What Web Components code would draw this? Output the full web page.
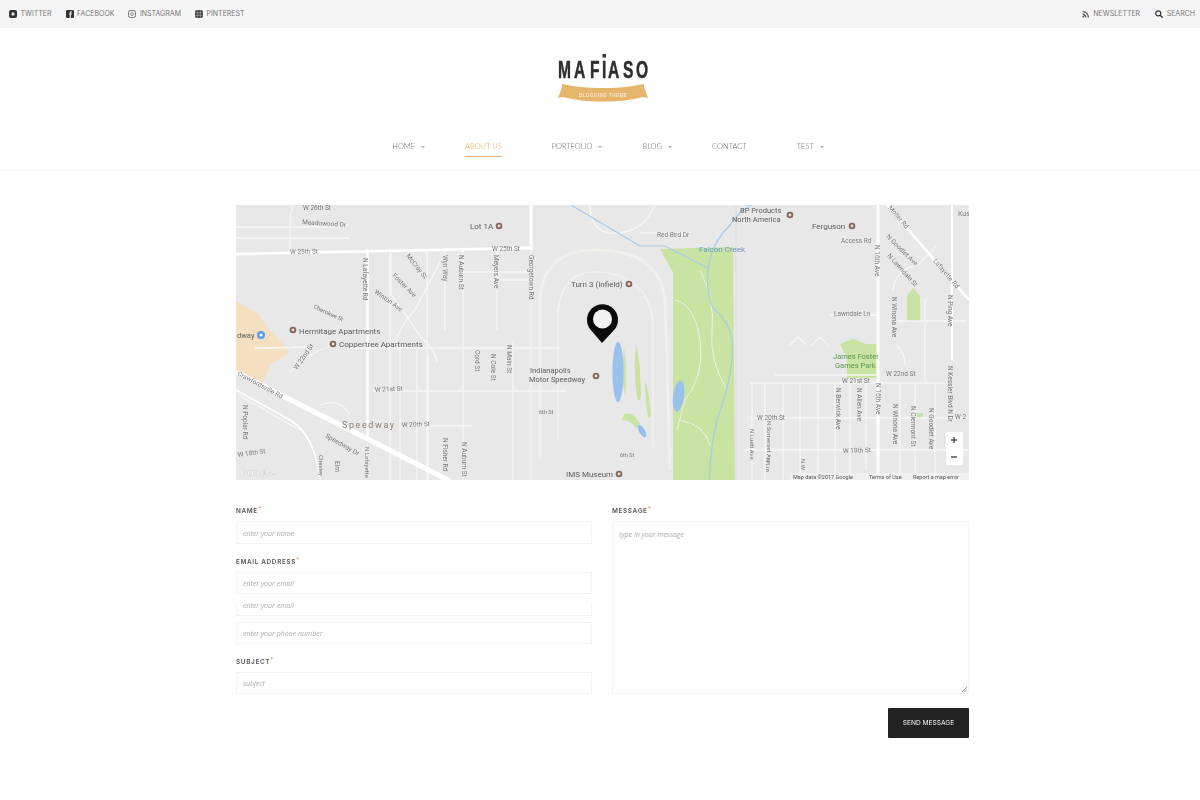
<!DOCTYPE html>
<html lang="en">
<head>
<meta charset="utf-8">
<title>Mafiaso - About us</title>
<style>
  body { margin: 0; background: #fff; font-family: "Inter", "Liberation Sans", sans-serif; }
</style>
</head>
<body>
<site-page>
  <top-bar>
    <top-link slot="left" icon="twitter">TWITTER</top-link>
    <top-link slot="left" icon="facebook">FACEBOOK</top-link>
    <top-link slot="left" icon="instagram">INSTAGRAM</top-link>
    <top-link slot="left" icon="pinterest">PINTEREST</top-link>
    <top-link slot="right" icon="rss">NEWSLETTER</top-link>
    <top-link slot="right" icon="search">SEARCH</top-link>
  </top-bar>
  <site-logo></site-logo>
  <main-nav>
    <nav-item caret>HOME</nav-item>
    <nav-item active>ABOUT US</nav-item>
    <nav-item caret>PORTFOLIO</nav-item>
    <nav-item caret>BLOG</nav-item>
    <nav-item>CONTACT</nav-item>
    <nav-item caret>TEST</nav-item>
  </main-nav>
  <map-panel></map-panel>
  <contact-form>
    <form-field slot="left" label="NAME"><text-box>enter your name</text-box></form-field>
    <form-field slot="left" label="EMAIL ADDRESS">
      <text-box short>enter your email</text-box>
      <text-box clipped>enter your email</text-box>
      <text-box short spaced>enter your phone number</text-box>
    </form-field>
    <form-field slot="left" label="SUBJECT"><text-box short>subject</text-box></form-field>
    <form-field slot="right" label="MESSAGE"><text-box area>type in your message</text-box></form-field>
    <send-button slot="action">SEND MESSAGE</send-button>
  </contact-form>
</site-page>

<script>
class SitePage extends HTMLElement {
  constructor() {
    super();
    this.attachShadow({ mode: "open" });
    this.shadowRoot.innerHTML = `
      <style>
        :host { display: block; height: 800px; overflow: hidden; filter: blur(0.5px); }
      </style>
      <slot></slot>
    `;
  }
}

class TopBar extends HTMLElement {
  constructor() {
    super();
    this.attachShadow({ mode: "open" });
    this.shadowRoot.innerHTML = `
      <style>
        :host { display: flex; justify-content: space-between; align-items: center; height: 28px; padding: 0 5px 0 9px; background: #f5f5f5; }
        .group { display: flex; align-items: center; gap: 14px; }
        .group.right { gap: 15px; }
      </style>
      <div class="group"><slot name="left"></slot></div>
      <div class="group right"><slot name="right"></slot></div>
    `;
  }
}

const TOP_ICONS = {
  twitter: `<rect width="8" height="8" rx="2" fill="#333"/><circle cx="4" cy="4" r="1.7" fill="#ddd"/>`,
  facebook: `<rect width="8" height="8" rx="1.2" fill="#333"/><path d="M5 8V4.6h1V3.4H5V2.8c0-.4.2-.6.6-.6H6V1.2H5.2C4.2 1.2 3.7 1.8 3.7 2.7v.7H3v1.2h.7V8z" fill="#ddd"/>`,
  instagram: `<rect x=".5" y=".5" width="7" height="7" rx="1.8" fill="none" stroke="#777"/><circle cx="4" cy="4" r="1.5" fill="none" stroke="#777" stroke-width=".8"/>`,
  pinterest: `<rect width="8" height="8" rx="2" fill="#444"/><path d="M0 2.7h8M0 5.3h8M2.7 0v8M5.3 0v8" stroke="#bbb" stroke-width=".5"/>`,
  rss: `<path d="M.5 1v1.3c3 0 5.2 2.2 5.2 5.2H7C7 3.9 4.1 1 .5 1z" fill="#555"/><path d="M.5 3.6v1.3c1.5 0 2.6 1.1 2.6 2.6h1.3c0-2.2-1.7-3.9-3.9-3.9z" fill="#555"/><circle cx="1.3" cy="6.7" r=".9" fill="#555"/>`,
  search: `<circle cx="3.3" cy="3.3" r="2.5" fill="none" stroke="#333" stroke-width="1.2"/><path d="M5.2 5.2 7.6 7.6" stroke="#333" stroke-width="1.4"/>`
};

class TopLink extends HTMLElement {
  constructor() {
    super();
    this.attachShadow({ mode: "open" });
  }

  connectedCallback() {
    this.shadowRoot.innerHTML = `
      <style>
        :host { display: inline-flex; align-items: center; gap: 3.5px; font-size: 7px; font-weight: 400; color: #777; line-height: 10px; }
        svg { width: 8px; height: 8px; display: block; flex: none; }
      </style>
      <svg viewBox="0 0 8 8">${TOP_ICONS[this.getAttribute("icon")]}</svg>
      <slot></slot>
    `;
  }
}

class SiteLogo extends HTMLElement {
  constructor() {
    super();
    this.attachShadow({ mode: "open" });
    this.shadowRoot.innerHTML = `
      <style>
        :host { display: flex; justify-content: center; height: 102px; padding: 22px 0 0 6px; box-sizing: border-box; }
        svg { width: 100px; height: 60px; display: block; }
      </style>
      <svg viewBox="0 0 100 60">
        <text y="28" x="7.7 32.3 56.9 75.4 84.6 107.7 127.7" transform="scale(.65 1)" font-family="'Liberation Sans', sans-serif" font-size="24" font-weight="700" fill="#2e2e2e" stroke="#2e2e2e" stroke-width=".5">MAFIASO</text>
        <rect x="49.5" y="4" width="3.5" height="3.5" fill="#333"/>
        <path d="M9 34Q30 38.500 50 38 70 38.500 91 34V37L95 48 90 47Q70 52 50 51.500 30 52 10 47L5 48 9 37Z" fill="#e6b56c"/>
        <text x="50" y="47" text-anchor="middle" font-family="'Liberation Sans', sans-serif" font-size="4.8" font-weight="700" letter-spacing=".3" fill="#f8e6c8">BLOGGING THEME</text>
      </svg>
    `;
  }
}

class MainNav extends HTMLElement {
  constructor() {
    super();
    this.attachShadow({ mode: "open" });
    this.shadowRoot.innerHTML = `
      <style>
        :host { display: flex; justify-content: center; align-items: flex-start; gap: 50px; height: 40px; padding-left: 6px; border-bottom: 1px solid #f9f9f9; }
      </style>
      <slot></slot>
    `;
  }
}

class NavItem extends HTMLElement {
  constructor() {
    super();
    this.attachShadow({ mode: "open" });
    this.shadowRoot.innerHTML = `
      <style>
        :host { display: block; position: relative; padding: 11px 0 3px; font-family: "Lato", sans-serif; font-size: 7.5px; font-weight: 300; line-height: 12px; color: #666; border-bottom: 1.5px solid transparent; }
        :host([active]) { color: #e0a452; border-bottom-color: #e9b76f; }
        :host([caret])::after { content: ""; position: absolute; left: calc(100% + 6px); top: 16px; border: 2px solid transparent; border-top: 2.5px solid #aaa; border-bottom: 0; }
      </style>
      <slot></slot>
    `;
  }
}

class MapPanel extends HTMLElement {
  constructor() {
    super();
    this.attachShadow({ mode: "open" });
  }

  // [x, y, text, size, rotation, colour]
  labels() {
    const grey = "#7a7a7a", dark = "#5e5e5e", green = "#5b9a48", blue = "#6a98cc";
    return [
      [303, 210, "W 26th St", 6.5, 0, grey], [302, 224, "Meadowood Dr", 6.5, 4, grey],
      [470, 229, "Lot 1A", 8, 0, dark], [290, 254, "W 25th St", 6.5, -1, grey], [492, 251, "W 25th St", 6.5, 0, grey],
      [363, 258, "N Lafayette Rd", 6.5, 90, grey], [406, 256, "McCray St", 6.5, 52, grey],
      [392, 276, "Foster Ave", 6.5, 45, grey], [374, 293, "Winton Ave", 6.5, 35, grey],
      [443, 255, "Wyn Way", 6.5, 90, grey], [459, 255, "N Auburn St", 6.5, 90, grey], [494, 255, "Meyers Ave", 6.5, 90, grey],
      [529, 255, "Georgetown Rd", 6.5, 90, grey], [313, 308, "Cherokee St", 6, 25, grey],
      [299, 334, "Hermitage Apartments", 8, 0, dark], [339, 347, "Coppertree Apartments", 8, 0, dark],
      [237, 338, "dway", 7.5, 0, dark], [297, 370, "W 22nd St", 6.5, -55, grey], [375, 392, "W 21st St", 6.5, -3, grey],
      [342, 428, "Speedway", 9, 0, "#8b7f76"], [402, 427, "W 20th St", 6.5, -2, grey],
      [237, 375, "Crawfordsville Rd", 6.5, 28, grey], [325, 437, "Speedway Dr", 6.5, 30, grey],
      [243, 405, "N Poplar Rd", 6.5, 90, grey], [238, 457, "W 18th St", 6.5, -8, grey],
      [319, 455, "Chesley", 6, 90, grey], [335, 461, "Elm", 6.5, 90, grey], [365, 447, "N Lafayette", 6, 90, grey],
      [443, 438, "N Fisher Rd", 6.5, 90, grey], [462, 442, "N Auburn St", 6.5, 90, grey],
      [475, 350, "Cord St", 6.5, 90, grey], [491, 354, "N Cole St", 6.5, 90, grey], [507, 345, "N Main St", 6.5, 90, grey],
      [530, 373, "Indianapolis", 7.5, 0, dark], [529, 382, "Motor Speedway", 7.5, 0, dark],
      [571, 287, "Turn 3 (Infield)", 8, 0, dark], [566, 477, "IMS Museum", 8, 0, dark], [539, 414, "6th St", 5.5, 0, grey],
      [740, 213, "BP Products", 7.5, 0, dark], [732, 222, "North America", 7.5, 0, dark], [812, 229, "Ferguson", 8, 0, dark],
      [657, 237, "Red Bird Dr", 6.5, 0, grey], [699, 252, "Falcon Creek", 8, 0, blue], [841, 243, "Access Rd", 6.5, 0, grey],
      [875, 245, "N 16th Ave", 6.5, 90, grey], [886, 237, "N Goodlet Ave", 6.5, 45, grey], [888, 208, "Moller Rd", 6.5, 50, grey],
      [933, 261, "Lafayette Rd", 6.5, 50, grey], [887, 256, "N Lawndale St", 6.5, 48, grey], [834, 316, "Lawndale Ln", 6.5, 0, grey],
      [958, 216, "Kus", 7, 0, grey], [892, 297, "N Winona Ave", 6.5, 90, grey],
      [833, 359, "James Foster", 7.5, 0, green], [835, 368, "Games Park", 7.5, 0, green],
      [886, 376, "W 22nd St", 6.5, 0, grey], [842, 383, "W 21st St", 6.5, 0, grey], [757, 420, "W 20th St", 6.5, 0, grey],
      [843, 453, "W 18th St", 6.5, -2, grey], [620, 457, "6th St", 5.5, 0, grey], [955, 419, "W 2", 6.5, 0, grey],
      [750, 429, "N Luett Ave", 6, 90, grey], [767, 421, "N Somerset Ave", 6, 90, grey],
      [766, 458, "N Lin", 6, 90, grey], [801, 459, "N W", 6, 90, grey], [836, 388, "N Berwick Ave", 6.5, 90, grey],
      [857, 388, "N Allen Ave", 6.5, 90, grey], [876, 383, "N 16th Ave", 6.5, 90, grey], [893, 404, "N Winona Ave", 6.5, 90, grey],
      [911, 406, "N Clermont St", 6.5, 90, grey], [929, 408, "N Goodlet Ave", 6.5, 90, grey],
      [948, 295, "N Ping Ave", 6.5, 90, grey], [948, 366, "N Kessler Blvd N Dr", 6.5, 90, grey]
    ];
  }

  pois() {
    return [[499, 226], [293, 330], [333, 344], [596, 376], [629, 284], [619, 474], [790, 215], [852, 226]];
  }

  svgLabels() {
    return this.labels().map(([x, y, t, s, r, c]) =>
      `<text x="${x}" y="${y}" font-size="${s}" fill="${c}"${t === "Speedway" ? ' letter-spacing="1.6"' : ""}${r ? ` transform="rotate(${r} ${x} ${y})"` : ""}>${t}</text>`
    ).join("");
  }

  svgPois() {
    return this.pois().map(([x, y]) =>
      `<circle cx="${x}" cy="${y}" r="3.3" fill="#85665a"/><circle cx="${x}" cy="${y}" r="1.4" fill="#e9ddd5"/>`
    ).join("");
  }

  connectedCallback() {
    this.shadowRoot.innerHTML = `
      <style>
        :host { display: block; width: 733px; height: 275px; margin: 34px 0 0 236px; overflow: hidden; }
        svg { display: block; width: 733px; height: 275px; font-family: "Roboto", "Liberation Sans", sans-serif; filter: blur(0.3px); }
      </style>
      <svg viewBox="236 205 733 275">
        <rect x="236" y="205" width="733" height="275" fill="#e8e8e8"/>

        <!-- land use -->
        <path d="M236 301 258 314 268 328 290 352 270 365 262 384 236 372z" fill="#f4dfc0"/>
        <path d="M660 249 733 247 735 480 673 480 673 272z" fill="#c8e3a2"/>
        <path d="M907 296 913 288 920 296V321H907z" fill="#c8e3a2"/>
        <path d="M840 344 853 339 866 344H877V378H847V358z" fill="#c8e3a2"/>
        <rect x="917" y="413" width="6" height="6" fill="#c8e3a2"/>
        <path d="M636 345q4 10 5 50q-1 10-4 2q-4-30-1-52zM624 348q4 25 1 48q-5-20-1-48zM624 414q10-3 16 10l-4 4q-5-8-14-8zM645 380q5 15 6 38l-3-1q-3-20-3-37z" fill="#c8e3a2"/>

        <!-- speedway track -->
        <path d="M540 460V300q3-50 55-50 65 0 70 50l5 170" fill="none" stroke="#efefec" stroke-width="3"/>
        <path d="M558 440V310q5-40 40-38 50 3 55 50v125" fill="none" stroke="#f1f1ef" stroke-width="1.5"/>

        <!-- streets -->
        <g fill="none" stroke="#f6f6f6" stroke-width="1.3">
          <path d="M236 227H340q5 0 8-3M236 238H350M293 205q-3 8-3 22V249"/>
          <path d="M390 249V480M427 249V480M445 249V330M463 249V480M497 249V330M513 340V480M400 345V480M417 350V480M428 355V480"/>
          <path d="M391 253V295q15 20 30 42 15 15 16 25M442 258 415 310q-15 15-20 35M490 280H530M461 272H530M350 348H560M255 348q35 0 60-2M290 372q20-20 40-26"/>
          <path d="M373 391H565M410 426H472M240 396 300 430M320 405q20-8 30 10"/>
          <path d="M590 205q0 25 20 28 25 2 40-18l5-10M640 233h50"/>
          <path d="M750 383H945M752 383V480M765 383V480M783 383V480M800 383V480M818 383V480M835 383V480M850 383V480M866 383V470M900 383V480M915 383V480M935 383V480"/>
          <path d="M750 418H969M745 450H969M775 375H880M790 345l8-8 8 8M812 345l8-8 8 8M830 315H878M870 240H840M893 290q2-20 25-25L936 247"/>
          <path d="M925 298V384M897 321H965M897 345q8 8 8 20"/>
        </g>
        <g fill="none" stroke="#eef2e6">
          <path d="M675 300q20 5 25 40t-15 60l-8 30M700 270q15 30 12 60t15 60M680 420q25 5 30 25"/>
        </g>
        <path d="M736 205V480" stroke="#dcdcdc"/>
        <path d="M531 250V480" stroke="#f1f1f1" stroke-width="1.5"/>
        <g fill="none" stroke="#fff">
          <path d="M236 254 530 248" stroke-width="2.8"/>
          <path d="M531 205V250" stroke-width="3"/>
          <path d="M367.5 249V440" stroke-width="2.5"/>
          <path d="M236 372 450 481" stroke-width="5"/>
          <path d="M878 205V480" stroke-width="3"/>
          <path d="M887 205 969 300" stroke-width="2.5"/>
          <path d="M952 205V360" stroke-width="2"/>
          <path d="M236 390 290 420q25 15 30 60" stroke-width="1.5"/>
        </g>

        <!-- water -->
        <g fill="none" stroke="#a8cbe8" stroke-width="1.2">
          <path d="M571 205 640 246h25l43 22"/>
          <path d="M752 205q-12 5-22 20-20 20-22 45-2 25 5 38 17 15 19 32 3 30-15 80-6 25-8 60"/>
        </g>
        <ellipse cx="618" cy="372" rx="5.5" ry="30" fill="#9ac0ee"/>
        <ellipse cx="678.5" cy="396" rx="5.5" ry="15.5" fill="#9ac0ee" transform="rotate(8 678.5 396)"/>
        <ellipse cx="642" cy="431" rx="3" ry="7" fill="#9ac0ee" transform="rotate(-30 642 431)"/>

        <!-- text and markers -->
        <circle cx="261" cy="335" r="4" fill="#5b9bec"/><circle cx="261" cy="335" r="1.6" fill="#fff"/>
        ${this.svgPois()}
        ${this.svgLabels()}
        <text x="240" y="476" font-size="11" font-weight="700" fill="#f7f7f7" stroke="#cfcfcf" stroke-width=".4">Google</text>

        <!-- zoom control -->
        <rect x="946" y="432" width="17" height="33" fill="#fff"/>
        <path d="M951 440h6M954 437v6" stroke="#555" stroke-width="1.5"/>
        <path d="M951 457h6" stroke="#555" stroke-width="1.5"/>

        <!-- attribution -->
        <rect x="790" y="473" width="179" height="7" fill="#f4f4f4" fill-opacity=".7"/>
        <text x="793" y="478.5" font-size="5.5" fill="#555">Map data ©2017 Google</text>
        <text x="869" y="478.5" font-size="5.5" fill="#555">Terms of Use</text>
        <text x="913" y="478.5" font-size="5.5" fill="#555">Report a map error</text>

        <!-- pin -->
        <path d="M602 343 590 329A15.5 15.5 0 1 1 615 329z" fill="#0a0a0a"/>
        <circle cx="602.5" cy="319" r="9.5" fill="#f2f2f2"/>
      </svg>
    `;
  }
}

class ContactForm extends HTMLElement {
  constructor() {
    super();
    this.attachShadow({ mode: "open" });
    this.shadowRoot.innerHTML = `
      <style>
        :host { display: grid; grid-template-columns: 356px 357px; column-gap: 20px; width: 733px; margin: 25px 0 0 236px; }
        .col { display: flex; flex-direction: column; gap: 12px; }
        .action { grid-column: 1 / -1; display: flex; justify-content: flex-end; margin-top: 14px; }
      </style>
      <div class="col"><slot name="left"></slot></div>
      <div class="col"><slot name="right"></slot></div>
      <div class="action"><slot name="action"></slot></div>
    `;
  }
}

class FormField extends HTMLElement {
  constructor() {
    super();
    this.attachShadow({ mode: "open" });
  }

  connectedCallback() {
    this.shadowRoot.innerHTML = `
      <style>
        :host { display: block; }
        .label { display: block; height: 10px; line-height: 8px; margin-bottom: 6px; font-family: "Inter", sans-serif; font-size: 6.4px; font-weight: 600; letter-spacing: .65px; color: #555; }
        .star { color: #ee8a5e; font-size: 6px; vertical-align: 2px; }
      </style>
      <span class="label">${this.getAttribute("label")}<span class="star">*</span></span>
      <slot></slot>
    `;
  }
}

class TextBox extends HTMLElement {
  constructor() {
    super();
    this.attachShadow({ mode: "open" });
    this.shadowRoot.innerHTML = `
      <style>
        :host { display: block; box-sizing: border-box; height: 23px; padding: 0 6px; border: 1px solid #f3f3f3; background: #fff; font-family: "Open Sans", sans-serif; font-size: 7px; font-style: italic; line-height: 23px; color: #aaa; }
        :host([short]) { height: 22px; line-height: 22px; }
        :host([clipped]) { height: 22px; border-top: 0; line-height: 24px; border-image: linear-gradient(transparent 40%, #f3f3f3 40%) 1; }
        :host([spaced]) { margin-top: 6px; }
        :host([area]) { position: relative; height: 173px; line-height: 25px; }
        svg { display: none; position: absolute; right: 1px; bottom: 1px; width: 5px; height: 5px; }
        :host([area]) svg { display: block; }
      </style>
      <slot></slot>
      <svg viewBox="0 0 5 5"><path d="M5 0 0 5M5 2.5 2.5 5" stroke="#888" stroke-width=".8"/></svg>
    `;
  }
}

class SendButton extends HTMLElement {
  constructor() {
    super();
    this.attachShadow({ mode: "open" });
    this.shadowRoot.innerHTML = `
      <style>
        :host { display: flex; align-items: center; justify-content: center; width: 81px; height: 30px; background: #222; border-radius: 1px; font-family: "Inter", sans-serif; font-size: 6.6px; font-weight: 500; color: #ddd; }
      </style>
      <slot></slot>
    `;
  }
}

customElements.define("site-page", SitePage);
customElements.define("top-bar", TopBar);
customElements.define("top-link", TopLink);
customElements.define("site-logo", SiteLogo);
customElements.define("main-nav", MainNav);
customElements.define("nav-item", NavItem);
customElements.define("map-panel", MapPanel);
customElements.define("contact-form", ContactForm);
customElements.define("form-field", FormField);
customElements.define("text-box", TextBox);
customElements.define("send-button", SendButton);
</script>
</body>
</html>
